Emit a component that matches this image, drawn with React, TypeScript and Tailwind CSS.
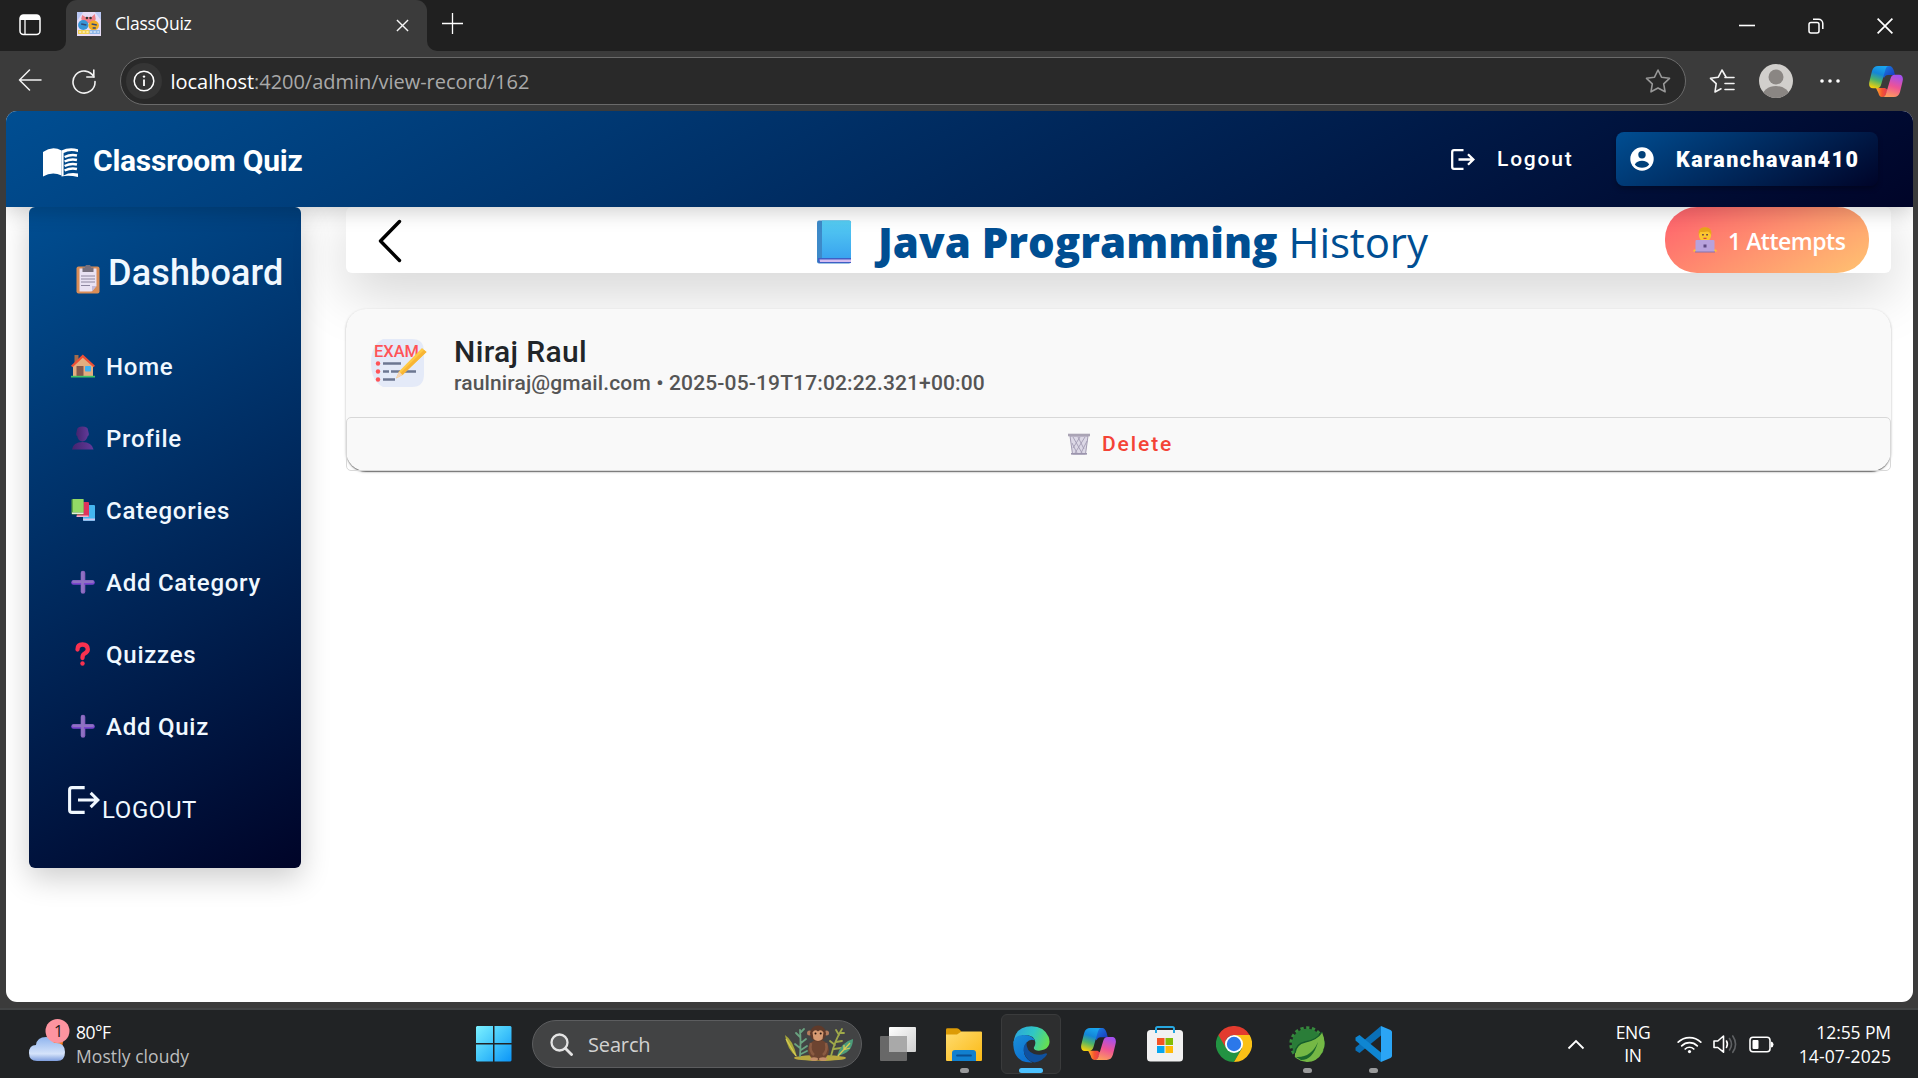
import React from "react";

const segoe = "font-['Open_Sans','Noto_Sans',sans-serif]";
const brandFill = "bg-[linear-gradient(150deg,#004e92,#000428)]";

function Favicon() {
  return (
    <svg width="24" height="24" viewBox="0 0 23 24" preserveAspectRatio="none">
      <rect width="23" height="24" fill="#e6dcf5" />
      <path d="M0 0h6L0 9zM17 0h6v8z" fill="#b9c8f5" />
      <path d="M5 3l3 2h6l3-3 1 5-2 4H7L4 7z" fill="#f0808a" />
      <circle cx="6" cy="13" r="5" fill="#3796d8" />
      <circle cx="16" cy="13.500" r="5" fill="#f2ae24" />
      <circle cx="9.500" cy="6" r="1.200" fill="#333" />
      <circle cx="13" cy="6" r="1.200" fill="#333" />
      <path d="M4 12l5 1M14 12l5 1M15 16h3" stroke="#354a77" strokeWidth="1.300" />
      <rect x="1" y="18" width="21" height="4" fill="#f3cf4e" />
      <path d="M12 18h10v4H12z" fill="#8fb6e8" />
      <path d="M2 20h19" stroke="#fff" strokeDasharray="2 1.500" />
    </svg>
  );
}

function Copilot({ size }: { size: number }) {
  const a = "cpA" + size;
  const b = "cpB" + size;
  const c = "cpC" + size;
  const d = "cpD" + size;
  return (
    <svg width={size} height={(size * 31) / 34} viewBox="0 0 34 31">
      <defs>
        <linearGradient id={a} x1="0.600" y1="0" x2="0.300" y2="1">
          <stop offset="0" stopColor="#1aa5ee" />
          <stop offset="0.350" stopColor="#1486d8" />
          <stop offset="0.650" stopColor="#4db36a" />
          <stop offset="1" stopColor="#f3d00c" />
        </linearGradient>
        <linearGradient id={b} x1="0.600" y1="0" x2="0.300" y2="1">
          <stop offset="0" stopColor="#a450ee" />
          <stop offset="0.500" stopColor="#ee5396" />
          <stop offset="1" stopColor="#fd9d5b" />
        </linearGradient>
        <linearGradient id={c} x1="0" y1="0" x2="1" y2="1">
          <stop offset="0" stopColor="#1a8ae8" />
          <stop offset="1" stopColor="#1a2fb8" />
        </linearGradient>
        <linearGradient id={d} x1="0" y1="0" x2="1" y2="0">
          <stop offset="0" stopColor="#ffb02e" />
          <stop offset="0.500" stopColor="#f4552f" />
          <stop offset="1" stopColor="#e0355c" />
        </linearGradient>
      </defs>
      <path d="M14 0h6c3 0 4 2 5 5l1 4h-7c-2 0-3 1-4 3l-3-4z" fill={`url(#${c})`} />
      <path d="M7 22h9l3 2-2 4c-.6 2-1.500 3-4 3-2 0-3-1.500-3.600-4z" fill={`url(#${d})`} />
      <path d="M9 0h11c-2 0-3 1.500-3.700 4l-4 14c-.8 3-2 4.300-4.600 4.300H4c-4 0-4.400-4-3.500-7L3 5C4 1.500 6 0 9 0z" fill={`url(#${a})`} />
      <path d="M25 31H13.500c2 0 3-1.500 3.700-4l4.200-14c.8-3 2-4.300 4.600-4.300h4c4 0 4.400 4 3.500 7L31 26c-1 3.500-3 5-6 5z" fill={`url(#${b})`} />
    </svg>
  );
}

function Star({ list = false }: { list?: boolean }) {
  return (
    <svg width="26" height="26" viewBox="0 0 26 26" fill="none" stroke={list ? "#f4f4f4" : "#989898"} strokeWidth="1.600" strokeLinejoin="round" strokeLinecap="round">
      {list ? (
        <>
          <path d="M17 9l-4-7-3.700 7.200-7.800 1.100 5.700 5.400L6 24l6-3.200" />
          <path d="M16 9.500h9M16 15.500h9M16 21.500h9" />
        </>
      ) : (
        <path d="M13 2l3.500 7.200 8 1.100-5.800 5.500 1.400 8-7.100-3.800L6 23.800l1.300-8-5.800-5.500 8-1.100z" />
      )}
    </svg>
  );
}

function TabStrip() {
  return (
    <div className="flex h-[51px] bg-[#3b3b3b]">
      <div className="flex h-[51px] w-[66px] shrink-0 items-center rounded-br-[10px] bg-[#202020] pb-[2px] pl-[19px]">
        <svg width="22" height="22" viewBox="0 0 22 22" fill="none">
          <rect x="1" y="1" width="20" height="19.500" rx="3.500" stroke="#fff" strokeWidth="1.500" />
          <path d="M1 6V4a3 3 0 0 1 3-3h14a3 3 0 0 1 3 3v2z" fill="#fff" />
          <path d="M6 6v14.500" stroke="#fff" strokeWidth="1.300" />
        </svg>
      </div>
      <div className="h-[51px] w-[361px] shrink-0 bg-[#202020]">
        <div className="flex h-[51px] items-center rounded-t-[11px] bg-[#3b3b3b] pb-[4px] pl-[11px]">
          <Favicon />
          <span className={`${segoe} ml-[14px] w-[281px] text-[17.500px] tracking-[-0.250px] text-white`}>ClassQuiz</span>
          <svg width="13" height="13" viewBox="0 0 14 14" stroke="#f5f5f5" strokeWidth="1.500" className="mt-[3px]">
            <path d="M1 1l12 12M13 1L1 13" />
          </svg>
        </div>
      </div>
      <div className="flex flex-1 rounded-bl-[10px] bg-[#202020]">
        <svg width="21" height="21" viewBox="0 0 21 21" stroke="#fff" strokeWidth="1.300" className="ml-[15px] mt-[13px]">
          <path d="M10.500 0v21M0 10.500h21" />
        </svg>
        <div className="ml-auto flex items-center gap-[53px] pr-[25px]">
          <svg width="16" height="16" viewBox="0 0 16 16" stroke="#fff" strokeWidth="1.600"><path d="M0 7.500h16" /></svg>
          <svg width="16" height="16" viewBox="0 0 16 16" fill="none" stroke="#fff" strokeWidth="1.500">
            <rect x="1" y="4.500" width="10" height="10.500" rx="2" />
            <path d="M5 1.200h5.500a4.300 4.300 0 0 1 4.300 4.300V11" />
          </svg>
          <svg width="16" height="16" viewBox="0 0 16 16" stroke="#fff" strokeWidth="1.700"><path d="M.6.6l14.800 14.800M15.400.6L.6 15.400" /></svg>
        </div>
      </div>
    </div>
  );
}

function Toolbar() {
  return (
    <div className="flex h-[60px] items-center bg-[#3b3b3b] pl-[18px]">
      <svg width="24" height="22" viewBox="0 0 24 22" fill="none" stroke="#f2f2f2" strokeWidth="1.500" strokeLinecap="round" strokeLinejoin="round" className="mb-[2px]">
        <path d="M23 11H1.500M11.500 1L1.500 11l10 10" />
      </svg>
      <svg width="26" height="26" viewBox="0 0 26 26" fill="none" stroke="#f2f2f2" strokeWidth="1.600" strokeLinecap="round" className="ml-[29px]">
        <path d="M22.800 9A11 11 0 1 0 24 13.500" />
        <path d="M22.800 2v7h-7" />
      </svg>
      <div className="ml-[23px] flex h-[48px] w-[1566px] items-center rounded-full border-[1.500px] border-[#6a6a6a] bg-[#292929] pl-[4.500px] pr-[14px]">
        <div className="flex size-[36px] items-center justify-center rounded-full bg-[#353535]">
          <svg width="22" height="22" viewBox="0 0 22 22" fill="none" stroke="#fff" strokeWidth="1.500">
            <circle cx="11" cy="11" r="9.800" />
            <path d="M11 9.500V16" strokeWidth="1.800" />
            <circle cx="11" cy="6.600" r="1.200" fill="#fff" stroke="none" />
          </svg>
        </div>
        <span className={`${segoe} ml-[9px] pt-[1px] text-[20px] tracking-[-0.030px] text-[#a9a9a9]`}>
          <span className="text-white">localhost</span>:4200/admin/view-record/162
        </span>
        <span className="ml-auto"><Star /></span>
      </div>
      <span className="ml-[23px]"><Star list /></span>
      <svg width="34" height="34" viewBox="0 0 34 34" className="ml-[24px]">
        <defs><clipPath id="avatarClip"><circle cx="17" cy="17" r="17" /></clipPath></defs>
        <circle cx="17" cy="17" r="17" fill="#d1cfcc" />
        <g clipPath="url(#avatarClip)" fill="#8a8683">
          <circle cx="17" cy="13" r="7.500" />
          <ellipse cx="17" cy="33" rx="14" ry="11" />
        </g>
      </svg>
      <svg width="20" height="4" viewBox="0 0 20 4" fill="#fff" className="ml-[27px]">
        <circle cx="2" cy="2" r="1.800" /><circle cx="10" cy="2" r="1.800" /><circle cx="18" cy="2" r="1.800" />
      </svg>
      <span className="ml-[29px]"><Copilot size={34} /></span>
    </div>
  );
}

function LogoutIcon({ w, h }: { w: number; h: number }) {
  return (
    <svg width={w} height={h} viewBox="0 0 24 21" fill="none" stroke="currentColor" strokeWidth="2.300" preserveAspectRatio="none">
      <path d="M12.500 1.200H3Q1.200 1.200 1.200 3v15Q1.200 19.800 3 19.800h9.500" />
      <path d="M7.500 10.500H22M17 5.200l5.400 5.300L17 15.800" />
    </svg>
  );
}

function NavBar() {
  return (
    <header className={`relative z-10 flex h-24 items-center pl-[37px] pr-[35px] text-white shadow-[0_4px_20px_rgba(0,0,0,0.2)] ${brandFill}`}>
      <svg width="35" height="30" viewBox="0 0 34 30" preserveAspectRatio="none" className="mt-[8px]">
        <path d="M0 4Q9-2.500 18 2.500V27.500Q9 23 0 28.500z" fill="#fff" />
        <path d="M18 2.500Q25-1 34 1.200V4Q26 1.800 20 5V27.500Q26 24 34 25.600V29Q25 27 18 28.500" fill="#fff" />
        <path d="M21 9q6-3 12-1.500M21 13.500q6-3 12-1.500M21 18q6-3 12-1.500M21 22.500q6-3 12-1.500" stroke="#fff" strokeWidth="2.400" fill="none" />
      </svg>
      <span className="ml-[15px] pt-[2px] font-['Roboto',sans-serif] text-[30px] font-bold tracking-[-0.250px]">Classroom Quiz</span>
      <div className="ml-auto flex items-center">
        <LogoutIcon w={24} h={21} />
        <span className="ml-[22px] w-[119px] pt-[2px] font-['Roboto',sans-serif] text-[21px] font-medium tracking-[1.800px]">Logout</span>
        <div className={`flex h-[54px] w-[262px] items-center rounded-lg pl-[14px] shadow-[0_3px_5px_rgba(0,0,0,0.25)] ${brandFill}`}>
          <svg width="24" height="24" viewBox="0 0 24 24">
            <circle cx="12" cy="12" r="11.700" fill="#fff" />
            <circle cx="12" cy="7.800" r="3.700" fill="#004079" />
            <path d="M4.800 17.500Q7 13.800 12 13.800T19.200 17.500Q16.500 20.800 12 20.800T4.800 17.500z" fill="#004079" />
          </svg>
          <span className="ml-[22px] pt-[2px] font-['Roboto',sans-serif] text-[21.500px] font-black tracking-[1.450px]">Karanchavan410</span>
        </div>
      </div>
    </header>
  );
}

function ClipboardEmoji() {
  return (
    <svg width="24" height="29" viewBox="0 0 24 29">
      <rect x="0.500" y="1.500" width="23" height="27" rx="2" fill="#d98d57" />
      <path d="M3.500 3.500h17V21l-5 5.500h-12z" fill="#e9e2f3" />
      <path d="M20.500 21h-4.500v5.500z" fill="#c5b9d6" />
      <path d="M6.500 2.500h2.500a3 3 0 0 1 6 0h2.500V7h-11z" fill="#77707d" />
      <path d="M5 11h14M5 14h14M5 17h14M5 20.500h9" stroke="#8d86a0" strokeWidth="1.100" />
    </svg>
  );
}

function HomeEmoji() {
  return (
    <svg width="24" height="24" viewBox="0 0 24 24">
      <path d="M3.500 1h4v10h-4z" fill="#a36b4b" />
      <path d="M2 12L12 2l10 10v10H2z" fill="#e3ae80" />
      <path d="M0 11.800L11.800.5 24 11.800l-1.500 1.500L11.800 3.800 1.500 13.300z" fill="#ee4f35" />
      <rect x="5.500" y="12" width="7" height="10" rx="0.500" fill="#86584c" />
      <rect x="14" y="12" width="6" height="5.500" rx="0.800" fill="#3fb1f1" />
      <path d="M0 21.800h24V23.500H0z" fill="#3fc466" />
    </svg>
  );
}

function ProfileEmoji() {
  return (
    <svg width="24" height="24" viewBox="0 0 24 24">
      <defs>
        <linearGradient id="bust" x1="0" y1="0" x2="1" y2="0">
          <stop offset="0" stopColor="#43246f" />
          <stop offset="1" stopColor="#633a99" />
        </linearGradient>
      </defs>
      <path d="M6 4Q6 .5 11.500.5T17 4l.8 3.500q.5 2-1 2.500Q15.500 15 11.500 15.500 7 15 6.200 10q-1.500-.5-1-2.500z" fill="url(#bust)" />
      <path d="M1 23.500Q2 16 11.500 16T22.500 23.500z" fill="url(#bust)" />
    </svg>
  );
}

function BooksEmoji() {
  return (
    <svg width="24" height="24" viewBox="0 0 24 24">
      <rect x="12" y="7" width="12" height="16" rx="1" fill="#45b5ee" />
      <path d="M12 20.500h12V22.500H12z" fill="#cfc4ee" />
      <rect x="6" y="4" width="12" height="15" rx="1" fill="#e0335d" />
      <path d="M5.500 17.500h12V19h-12z" fill="#f0b3cb" />
      <rect x="0.500" y="1" width="12" height="15.500" rx="1" fill="#5fa546" />
      <path d="M2 1h10.500v13H2z" fill="#93d966" />
      <path d="M1 14.500h11.500V16H1z" fill="#e4eed9" />
    </svg>
  );
}

function PlusEmoji() {
  return (
    <svg width="24" height="24" viewBox="0 0 24 24" strokeLinecap="round" strokeWidth="4.600">
      <path d="M12 3v18.500" stroke="#8660bd" />
      <path d="M2.500 12.500h19" stroke="#7a45cf" />
      <path d="M2.500 11.700h19M11.500 3v18.500" stroke="#8e72c2" strokeWidth="2.800" />
    </svg>
  );
}

function QuestionEmoji() {
  return (
    <svg width="24" height="24" viewBox="0 0 24 24" fill="none">
      <path d="M6.500 7.500Q6.500 2.500 11.500 2.500T16.800 7.300Q16.800 10 13.500 11.700 11.500 12.700 11.500 16" stroke="#f8314f" strokeWidth="4.300" strokeLinecap="round" />
      <circle cx="11.500" cy="21.500" r="2.200" fill="#f8314f" />
    </svg>
  );
}

const links: { label: string; icon: React.ReactNode }[] = [
  { label: "Home", icon: <HomeEmoji /> },
  { label: "Profile", icon: <ProfileEmoji /> },
  { label: "Categories", icon: <BooksEmoji /> },
  { label: "Add Category", icon: <PlusEmoji /> },
  { label: "Quizzes", icon: <QuestionEmoji /> },
  { label: "Add Quiz", icon: <PlusEmoji /> },
];

function Sidebar() {
  return (
    <aside className={`ml-[23px] h-[661px] w-[272px] shrink-0 rounded-md font-['Roboto',sans-serif] text-[#f0f8ff] shadow-[0_10px_30px_rgba(0,0,0,0.2)] ${brandFill}`}>
      <div className="flex h-[123px] items-center pl-[47px] pt-[9px]">
        <span className="mt-[13px]"><ClipboardEmoji /></span>
        <h2 className="ml-[8px] text-[36px] font-medium leading-none tracking-[0.150px]">Dashboard</h2>
      </div>
      <nav>
        {links.map((l) => (
          <a key={l.label} className="flex h-[72px] items-center pl-[42px]">
            {l.icon}
            <span className="ml-[11px] pt-[2px] text-[24px] font-medium tracking-[0.750px]">{l.label}</span>
          </a>
        ))}
      </nav>
      <div className="flex pl-[39px] pt-[24px]">
        <LogoutIcon w={32} h={28} />
        <span className="ml-[2px] mt-[12px] text-[24px] leading-[24px] tracking-[0.600px]">LOGOUT</span>
      </div>
    </aside>
  );
}

function BlueBook() {
  return (
    <svg width="35" height="44" viewBox="0 0 35 44">
      <defs>
        <linearGradient id="cover" x1="0" y1="0" x2="0" y2="1">
          <stop offset="0" stopColor="#55cdf2" />
          <stop offset="1" stopColor="#3aa4ef" />
        </linearGradient>
      </defs>
      <rect x="0" y="0.500" width="34" height="43" rx="2" fill="#3d8ac9" />
      <path d="M1 38h33v5H3q-2 0-2-2.500z" fill="#3f5fc4" />
      <path d="M2.500 39.500H34v2.500H3z" fill="#d5bdf0" />
      <path d="M5 .5h27.500Q34 .5 34 2v36H5z" fill="url(#cover)" />
    </svg>
  );
}

function TechEmoji() {
  return (
    <svg width="24" height="26" viewBox="0 0 24 26">
      <path d="M0 24.500h3v-2H1zM24 24.500h-3v-2h2z" fill="#fbc62f" />
      <path d="M4 16q1-3 8-3t8 3z" fill="#e98a86" />
      <path d="M6 7Q5.500.5 12 .5T18 7v2.500Q17 14 12 14T6 9.500z" fill="#fbc62f" />
      <path d="M5.700 8.500Q4.500.3 12 .3T18.300 8.500Q17 4.800 14 4.500 9 5.500 7.500 4.800 6.500 6 5.700 8.500z" fill="#e8a51a" />
      <path d="M9.200 7.800h1.500M13.300 7.800h1.500" stroke="#54324a" strokeWidth="1.500" />
      <path d="M10.500 11.300h3" stroke="#d5453f" strokeWidth="1.200" />
      <rect x="2.500" y="13" width="19" height="12" rx="1" fill="#b8a2dc" />
      <path d="M10.500 17.500h3v3h-3z" fill="#5d4982" />
      <path d="M2 25h20" stroke="#8873ab" />
    </svg>
  );
}

function ExamIcon() {
  return (
    <svg width="57" height="48" viewBox="0 0 57 48">
      <path d="M13 0H42Q54 0 54 13V35Q54 48 42 48H13Q1 42 1 24T13 0z" fill="#e4eaf8" />
      <text x="4" y="17.500" textLength="45" lengthAdjust="spacingAndGlyphs" fontFamily="Roboto, sans-serif" fontSize="17" fontWeight="500" fill="#ff5357">EXAM</text>
      <g fill="#ff5357"><circle cx="8" cy="24.500" r="2.200" /><circle cx="8" cy="32.500" r="2.200" /><circle cx="8" cy="40.500" r="2.200" /></g>
      <path d="M13 24.500h18M13 32.500h6M21 32.500h9M35 32.500h11M13 40.500h12" stroke="#6c7791" strokeWidth="2.300" />
      <path d="M52 9l4.500 4-24 23-6.500 3.500 3-7z" fill="#ffc944" />
      <path d="M54 11L56.500 13l-24 23-2-2z" fill="#f8b535" />
      <path d="M29 32.500l3.500 3.500-6.500 3.500z" fill="#f3d3b8" />
    </svg>
  );
}

function TrashEmoji() {
  return (
    <svg width="22" height="22" viewBox="0 0 22 22" fill="none">
      <path d="M2 3h18l-2.500 18h-13z" fill="#dcd8e6" stroke="#a39cb3" />
      <path d="M5 4l9 16M10 4l6 12M4 10l5 10M17 4L7 20M12 4L5 15M19 8l-6 12" stroke="#a39cb3" strokeWidth="0.900" />
      <path d="M0 2h22" stroke="#aaa4b5" strokeWidth="2.600" />
      <path d="M3 20.800h16" stroke="#9c95ad" strokeWidth="1.600" />
    </svg>
  );
}

function MainContent() {
  return (
    <main className="ml-[45px] w-[1545px] shrink-0">
      <div className="flex h-[66px] items-center rounded-md bg-white pl-[32px] pr-[22px] shadow-[0_19px_58px_rgba(0,0,0,0.175)]">
        <svg width="24" height="44" viewBox="0 0 24 44" fill="none" stroke="#000" strokeWidth="3.400" strokeLinecap="round" strokeLinejoin="round" className="mt-[1px]">
          <path d="M21.500 2.500L2.500 22l19 19.500" />
        </svg>
        <span className="ml-[415px] mt-[4px]"><BlueBook /></span>
        <h1 className={`${segoe} ml-[26px] w-[787px] whitespace-nowrap pt-[4px] text-[42px] leading-none text-[#004e92]`}>
          <b className="font-extrabold tracking-[0.020px]">Java Programming</b> <span className="font-medium tracking-[-0.100px]">History</span>
        </h1>
        <div className={`${segoe} flex h-[66px] w-[204px] items-center rounded-[32px] bg-[linear-gradient(150deg,#ff5f6d,#ffc371)] pl-[28px] text-white`}>
          <TechEmoji />
          <span className="ml-[11px] whitespace-nowrap pt-[3px] text-[23px] font-semibold leading-none tracking-[-0.500px]">1 Attempts</span>
        </div>
      </div>
      <div className="relative mt-[36px] h-[162px] rounded-[20px] bg-[#f9f9f9] font-['Roboto',sans-serif] shadow-[0_2px_1px_-1px_rgba(0,0,0,0.3),0_1px_1px_rgba(0,0,0,0.25),0_1px_3px_rgba(0,0,0,0.2)]">
        <div className="flex h-[108px] pl-[24px] pt-[30px]">
          <ExamIcon />
          <div className="-mt-[5px] ml-[27px]">
            <div className="text-[30px] font-medium leading-[36px] tracking-[0.350px] text-[#212529]">Niraj Raul</div>
            <div className="-mt-[1px] text-[21px] font-medium leading-[28px] tracking-[0.140px] text-[#555]">raulniraj@gmail.com • 2025-05-19T17:02:22.321+00:00</div>
          </div>
        </div>
        <button className="flex h-[54px] w-full items-center rounded-[5px] border border-[#d8d8d8] pl-[721px]">
          <TrashEmoji />
          <span className="ml-[12px] pt-[1px] text-[21px] font-medium tracking-[1.900px] text-[#f44336]">Delete</span>
        </button>
      </div>
    </main>
  );
}

function Weather() {
  return (
    <svg width="42" height="42" viewBox="0 0 42 42">
      <defs>
        <linearGradient id="cloud" x1="0" y1="0" x2="0" y2="1">
          <stop offset="0" stopColor="#8fb4ee" />
          <stop offset="0.700" stopColor="#d5e3fa" />
          <stop offset="1" stopColor="#7e9ede" />
        </linearGradient>
      </defs>
      <circle cx="25" cy="23" r="9" fill="#f47c1d" />
      <path d="M8 43q-8 0-8-8t7-8q1-8 10-8 6 0 8 6 11-1 11 9 0 9-8 9z" transform="translate(0 -1)" fill="url(#cloud)" />
      <circle cx="28.500" cy="12" r="12" fill="#fd94a0" />
      <text x="29.500" y="18" textAnchor="middle" fontFamily="Open Sans, sans-serif" fontSize="16" fill="#1c1c1c">1</text>
    </svg>
  );
}

function Monkey() {
  return (
    <svg width="70" height="38" viewBox="0 0 70 38">
      <ellipse cx="36" cy="33" rx="26" ry="3" fill="#b9a83f" />
      <g fill="none" stroke="#6aa380" strokeWidth="1.800" strokeLinecap="round">
        <path d="M16 31Q17 16 16 5M16 23l-5-4M17 18l5-4M16 12l-4-4M17 25l6-4M16 8l4-4M17 29l6-3" />
        <path d="M47 31Q51 15 58 4M51 20l-5-4M52 17l6-1M55 10l-3-5M50 24l7-1M56 8l4 0" stroke="#9fa94a" />
      </g>
      <path d="M1 10q8 5 12 22Q3 25 1 10z" fill="#a7a839" />
      <path d="M69 14q0 14-16 17 4-14 16-17z" fill="#4d9c7a" />
      <path d="M66 18L54 31M2 14l10 17M66 23l-7 2M60 20l0 4" stroke="#d7c955" strokeWidth="1.300" />
      <ellipse cx="34.500" cy="25" rx="10.500" ry="10.500" fill="#6d4431" />
      <circle cx="25.500" cy="8" r="2.500" fill="#b47c5d" />
      <circle cx="42.500" cy="8" r="2.500" fill="#b47c5d" />
      <ellipse cx="34" cy="8.500" rx="8" ry="8" fill="#5f3a2a" />
      <path d="M28.500 7.500q2.500-4 5.500-1 3-3 5.500 1l-1 6.500q-4.500 4-9 0z" fill="#d69a72" />
      <circle cx="31.500" cy="8.500" r="1" fill="#261510" />
      <circle cx="36.700" cy="8.500" r="1" fill="#261510" />
      <path d="M27 18q-2 8 3 12M42 18q2 8-3 12" stroke="#8b5b42" strokeWidth="2.600" fill="none" />
      <ellipse cx="30" cy="34" rx="4" ry="1.800" fill="#c58e6a" />
      <ellipse cx="39" cy="34" rx="4" ry="1.800" fill="#c58e6a" />
    </svg>
  );
}

function WindowsLogo() {
  return (
    <svg width="36" height="36" viewBox="0 0 36 36">
      <defs>
        <linearGradient id="win" gradientUnits="userSpaceOnUse" x1="0" y1="0" x2="36" y2="36">
          <stop offset="0" stopColor="#7cf1ff" />
          <stop offset="0.500" stopColor="#41c5fb" />
          <stop offset="1" stopColor="#0a93f7" />
        </linearGradient>
      </defs>
      <path d="M1 0h16v17H0V1zM18.500 0H34.500L35.500 1V17h-17zM0 18.500h17v17H1l-1-1zM18.500 18.500h17v16l-1 1h-16z" fill="url(#win)" />
    </svg>
  );
}

function TaskView() {
  return (
    <svg width="36" height="34" viewBox="0 0 36 34">
      <defs>
        <linearGradient id="tv" x1="0" y1="0" x2="1" y2="1">
          <stop offset="0" stopColor="#fff" />
          <stop offset="1" stopColor="#cfcfcf" />
        </linearGradient>
      </defs>
      <rect x="0" y="9" width="27" height="25" rx="1" fill="#686868" />
      <rect x="9" y="0" width="27" height="25" rx="1" fill="url(#tv)" />
      <path d="M9 9h18v16H9z" fill="#a9a9a9" />
    </svg>
  );
}

function Explorer() {
  return (
    <svg width="36" height="33" viewBox="0 0 36 33">
      <defs>
        <linearGradient id="folder" x1="0" y1="0" x2="1" y2="1">
          <stop offset="0" stopColor="#ffdc70" />
          <stop offset="1" stopColor="#fbb914" />
        </linearGradient>
      </defs>
      <path d="M0 1.500Q0 .3 1.500.3H11Q12.500.3 14 2l2 2.500V12H0z" fill="#dc9b06" />
      <path d="M0 6.500h11l4.500-3H35q1 0 1 1V32q0 1-1 1H1q-1 0-1-1z" fill="url(#folder)" />
      <path d="M6 33V25q0-3 3-3h18q3 0 3 3v8z" fill="#1180cf" />
      <path d="M11 27.500h14" stroke="#0a4f91" strokeWidth="1.800" strokeLinecap="round" />
    </svg>
  );
}

function Edge() {
  return (
    <svg width="37" height="37" viewBox="0 0 37 37">
      <defs>
        <linearGradient id="eTop" x1="0" y1="0.300" x2="1" y2="0.600">
          <stop offset="0" stopColor="#2ba5dd" />
          <stop offset="0.500" stopColor="#30c7c4" />
          <stop offset="1" stopColor="#66e04f" />
        </linearGradient>
        <linearGradient id="eLeft" x1="0" y1="0" x2="0.600" y2="1">
          <stop offset="0" stopColor="#1a8fd8" />
          <stop offset="1" stopColor="#0c6fd0" />
        </linearGradient>
      </defs>
      <path d="M.5 17Q2 .3 18.500.3 31 .3 35.700 11q3 9-4.500 12.500-5 2-9 .5-2.500-1.500-.5-4 2-5-2-9Q8 5 .5 17z" fill="url(#eTop)" />
      <path d="M.3 19Q0 9 11 9q8 0 11 5.500-5-2-8.500 2-4 5-2 12 2 5.500 8 8Q1.500 37.500.3 19z" fill="url(#eLeft)" />
      <path d="M13.500 16.500Q9 21 11.500 28q3 7.500 10 8.500Q30 35 34 28.500q0-2-2-1-5 2.300-11 .5-8-3-7.500-11.500z" fill="#0f519f" />
    </svg>
  );
}

function Store() {
  return (
    <svg width="36" height="36" viewBox="0 0 36 36">
      <rect x="0" y="4" width="36" height="31.500" rx="3.500" fill="#f1f1f1" />
      <path d="M9 7V2.500Q9 1 10.500 1h15Q27 1 27 2.500V7" fill="none" stroke="#27a7e0" strokeWidth="2" />
      <path d="M10 12h7.500v7H10z" fill="#f35325" />
      <path d="M18.500 12H26v7h-7.500z" fill="#81bc06" />
      <path d="M10 20h7.500v7H10z" fill="#05a6f0" />
      <path d="M18.500 20H26v7h-7.500z" fill="#ffba08" />
    </svg>
  );
}

function Chrome() {
  return (
    <svg width="36" height="36" viewBox="0 0 36 36">
      <path d="M18 18L2.400 9A18 18 0 0 0 18 36L25.800 22.500z" fill="#229342" />
      <path d="M25.800 22.500L18 36A18 18 0 0 0 33.600 9H18z" fill="#fbc116" />
      <path d="M2.400 9A18 18 0 0 1 33.600 9H18a9 9 0 0 0-7.800 13.500z" fill="#e33b2e" />
      <circle cx="18" cy="18" r="9" fill="#fff" />
      <circle cx="18" cy="18" r="7.200" fill="#2b78ea" />
    </svg>
  );
}

function Spring() {
  return (
    <svg width="36" height="36" viewBox="0 0 36 36">
      <circle cx="18" cy="18" r="16" fill="none" stroke="#378a3d" strokeWidth="3.400" strokeDasharray="3.200 2.500" />
      <circle cx="18" cy="18" r="15.200" fill="#2a7d38" />
      <path d="M33 6Q38 18 33 27 28 36 18 36 10 35 6 31 5 19 16 16 28 14 33 6z" fill="#75b845" />
      <path d="M7 31q15 1 22-15-5 18-17 18z" fill="#1b682c" />
      <path d="M33 6Q28 14 16 16 7 18 6 27" fill="none" stroke="#145c2c" strokeWidth="1.300" />
    </svg>
  );
}

function VSCode() {
  return (
    <svg width="37" height="36" viewBox="0 0 37 36">
      <path d="M26 9.500L4.500 27 .5 24.500v-3L26 0z" fill="#0a70b8" />
      <path d="M26 26.500L4.500 9 .5 11.500v3L26 36z" fill="#0f86d2" />
      <path d="M26 0l9.500 4q1.500.8 1.500 2v24q0 1.200-1.500 2L26 36z" fill="#2ba5f5" />
    </svg>
  );
}

function Slot({ children, mark }: { children: React.ReactNode; mark?: "dot" | "active" }) {
  return (
    <div className={mark === "active" ? "flex h-[60px] w-[60px] flex-col items-center rounded-md border border-[#3a3b3c] bg-[#2d2e2f]" : "flex h-[60px] w-[60px] flex-col items-center border border-transparent"}>
      <div className="flex h-[58px] shrink-0 items-center">{children}</div>
      {mark === "dot" && <div className="-mt-[5px] h-[5px] w-[9px] shrink-0 rounded-full bg-[#9a9b9c]" />}
      {mark === "active" && <div className="-mt-[5px] h-[5px] w-[24px] shrink-0 rounded-full bg-[#4cc2ff]" />}
    </div>
  );
}

function Taskbar() {
  return (
    <footer className={`${segoe} flex h-[70px] items-center border-t-2 border-[#414344] bg-[#212325] text-white`}>
      <div className="flex w-[447px] items-center pl-[29px] text-[17.500px] leading-[24px]">
        <span className="-mt-[9px]"><Weather /></span>
        <div className="-mt-[1px] ml-[5px]">
          <div className="tracking-[-0.500px]">80°F</div>
          <div className="tracking-[0.080px] text-[#bdbebe]">Mostly cloudy</div>
        </div>
      </div>
      <div className="ml-[29px]"><WindowsLogo /></div>
      <div className="ml-[20px] flex h-[48px] w-[330px] items-center rounded-full border border-[#5c5d5f] bg-[#424344] pl-[17px] pr-[7px]">
        <svg width="23" height="23" viewBox="0 0 23 23" fill="none" stroke="#e4e4e4" strokeLinecap="round">
          <circle cx="9.500" cy="9.500" r="8" strokeWidth="2.300" fill="#5a5b5c" />
          <path d="M15.500 15.500l6 6" strokeWidth="2.900" />
        </svg>
        <span className="ml-[15px] pt-[1px] text-[20px] tracking-[-0.150px] text-[#d2d2d2]">Search</span>
        <span className="ml-auto"><Monkey /></span>
      </div>
      <div className="ml-[6px]"><Slot><TaskView /></Slot></div>
      <div className="ml-[6px]"><Slot mark="dot"><Explorer /></Slot></div>
      <div className="ml-[7px]"><Slot mark="active"><Edge /></Slot></div>
      <div className="ml-[7px]"><Slot><Copilot size={35} /></Slot></div>
      <div className="ml-[7px]"><Slot><Store /></Slot></div>
      <div className="ml-[9px]"><Slot><Chrome /></Slot></div>
      <div className="ml-[13px]"><Slot mark="dot"><Spring /></Slot></div>
      <div className="ml-[6px]"><Slot mark="dot"><VSCode /></Slot></div>
      <div className="ml-auto flex items-center pr-[27px] text-[17.500px] leading-[23px]">
        <svg width="18" height="11" viewBox="0 0 18 11" fill="none" stroke="#fff" strokeWidth="1.800"><path d="M1.500 9.500L9 2l7.500 7.500" /></svg>
        <div className="ml-[28px] w-[40px] text-center tracking-[-0.400px]">ENG<br />IN</div>
        <svg width="25" height="19" viewBox="0 0 25 19" fill="none" stroke="#fff" strokeWidth="1.700" strokeLinecap="round" className="ml-[24px]">
          <path d="M1.200 7.200a16 16 0 0 1 22.600 0M4.700 10.800a11 11 0 0 1 15.600 0M8.200 14a6.200 6.200 0 0 1 8.600 0" />
          <circle cx="12.500" cy="16.600" r="1.600" fill="#fff" stroke="none" />
        </svg>
        <svg width="25" height="20" viewBox="0 0 25 20" fill="none" strokeWidth="1.600" strokeLinecap="round" strokeLinejoin="round" className="ml-[11px]">
          <path d="M1 7v6.500h3.800l5.700 4.700V2L4.800 7zM13.500 7q1.800 3 0 6.500" stroke="#fff" />
          <path d="M16.500 4.500q4 5.700 0 11.500M19.800 2q5.500 8.200 0 16.300" stroke="#5f6164" />
        </svg>
        <svg width="25" height="17" viewBox="0 0 25 17" className="ml-[11px]">
          <rect x="1" y="1.200" width="20" height="14.600" rx="3" fill="none" stroke="#fff" strokeWidth="1.600" />
          <rect x="3.500" y="4" width="6" height="9" rx="1" fill="#fff" />
          <path d="M22 5.500q2.500.5 2.500 3t-2.500 3z" fill="#fff" />
        </svg>
        <div className="-mt-[1px] ml-[21px] w-[96px] whitespace-nowrap text-right leading-[24px]">
          <div className="tracking-[-0.100px]">12:55 PM</div>
          <div className="tracking-[0.100px]">14-07-2025</div>
        </div>
      </div>
    </footer>
  );
}

export default function App() {
  return (
    <div className="flex h-[1078px] w-[1918px] flex-col overflow-hidden bg-[#3b3b3b] antialiased">
      <TabStrip />
      <Toolbar />
      <div className="mb-[6px] ml-[6px] h-[891px] w-[1907px] overflow-hidden rounded-[11px] bg-white">
        <NavBar />
        <div className="flex items-start">
          <Sidebar />
          <MainContent />
        </div>
      </div>
      <Taskbar />
    </div>
  );
}
